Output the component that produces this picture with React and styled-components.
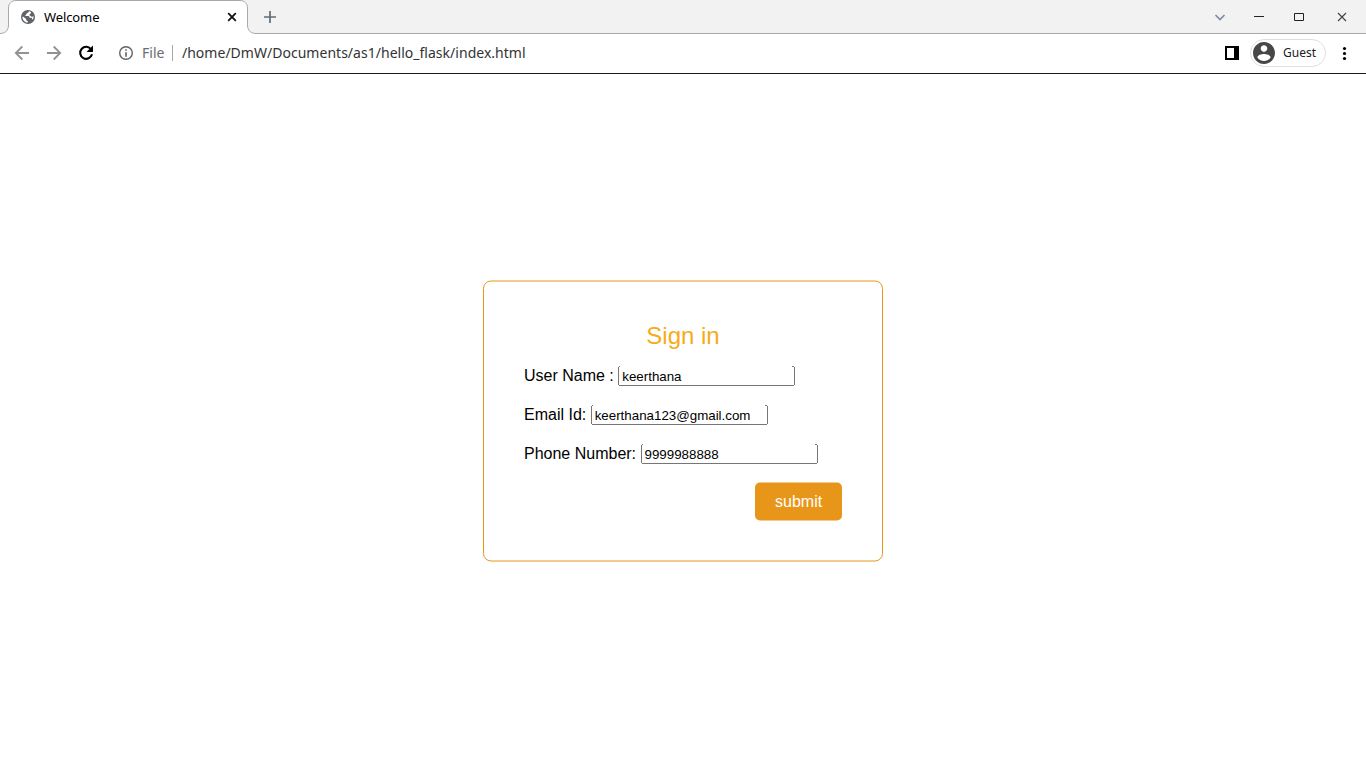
import React from "react";
import styled, { createGlobalStyle } from "styled-components";

const GlobalStyle = createGlobalStyle`
  *, *::before, *::after { box-sizing: border-box; }
  body { margin: 0; background: #fff; overflow: hidden; }
`;

const Window = styled.div`
  width: 1366px;
  height: 768px;
  display: flex;
  flex-direction: column;
  background: #fff;
  font-family: "Noto Sans", sans-serif;
`;

const TabStrip = styled.div`
  height: 34px;
  display: flex;
  flex: none;
  background: #f2f2f2;
`;

const TabEdge = styled.div`
  width: 8px;
  border-bottom: 1px solid #a9a9a9;
`;

const Tab = styled.div`
  position: relative;
  width: 240px;
  height: 34px;
  padding: 0 9px 0 12px;
  display: flex;
  align-items: center;
  font-size: 13px;
  letter-spacing: -0.1px;
  color: #000;
`;

const TabShape = styled.svg`
  position: absolute;
  left: -8px;
  top: 0;
`;

const TabTitle = styled.span`
  position: relative;
  flex: 1;
  margin-left: 8px;
  line-height: 18px;
`;

const Icon = styled.svg`
  position: relative;
  display: block;
  flex: none;
`;

const StripRest = styled.div`
  flex: 1;
  display: flex;
  align-items: center;
  justify-content: space-between;
  padding: 1px 16px 0;
  border-bottom: 1px solid #a9a9a9;
`;

const WindowControls = styled.div`
  display: flex;
  gap: 28px;
`;

const Toolbar = styled.div`
  height: 40px;
  flex: none;
  display: flex;
  align-items: center;
  padding: 0 14px 1px 12px;
  border-bottom: 1px solid #1a1a1f;
`;

const NavButtons = styled.div`
  display: flex;
  gap: 12px;
`;

const AddressBar = styled.div`
  flex: 1;
  display: flex;
  align-items: center;
  margin-left: 22px;
  font-size: 14px;
  line-height: 20px;
  letter-spacing: 0.02px;
  color: #333;
`;

const Scheme = styled.span`
  margin-left: 8px;
  padding-right: 8px;
  color: #6b6b70;
`;

const Divider = styled.span`
  width: 1px;
  height: 16px;
  margin-right: 8.5px;
  background: #a8a8a8;
`;

const Profile = styled.div`
  width: 76px;
  height: 28px;
  margin: 0 10px 0 10px;
  padding-left: 2px;
  display: flex;
  align-items: center;
  gap: 8px;
  border: 1px solid #dfdfdf;
  border-radius: 14px;
  font-size: 12px;
  color: #202124;
`;

const ProfileName = styled.span`
  line-height: 16px;
`;

const Page = styled.main`
  flex: 1;
  padding-top: 206px;
  font-family: "Liberation Sans", Arial, sans-serif;
  font-size: 16px;
  color: #000;
`;

const Card = styled.form`
  width: 400px;
  height: 281px;
  margin: 0 auto;
  padding: 40px;
  border: 1px solid #e8961a;
  border-radius: 8px;
  transform: translateY(0.5px);
`;

const Title = styled.h1`
  height: 28px;
  margin: 0 0 16px;
  font-size: 24px;
  font-weight: 400;
  line-height: 28px;
  text-align: center;
  color: #f5ac18;
`;

const Field = styled.label`
  display: flex;
  height: 21px;
  margin-bottom: 18px;
  line-height: 20px;
  white-space: pre;
`;

/* Open-topped outline: sides, base and short ticks at the upper corners. */
const Input = styled.input`
  width: 177px;
  height: 20px;
  padding: 3px 3px 2px 4px;
  border: 0;
  outline: 0;
  transform: translateY(0.5px);
  background:
    linear-gradient(#767676, #767676) 0 1px / 1px 18px no-repeat,
    linear-gradient(#767676, #767676) 176px 1px / 1px 18px no-repeat,
    linear-gradient(#767676, #767676) 1px 19px / 175px 1px no-repeat,
    linear-gradient(#767676, #767676) 1px 0 / 1px 1px no-repeat,
    linear-gradient(#767676, #767676) 174px 0 / 2px 1px no-repeat,
    #fff;
  font-family: "Liberation Sans", Arial, sans-serif;
  font-size: 13.3333px;
`;

const Submit = styled.button`
  display: block;
  width: 87px;
  height: 38px;
  margin-left: auto;
  padding: 10px 20px;
  border: 0;
  border-radius: 5px;
  background: #e8961a;
  color: #fff;
  font-family: "Liberation Sans", Arial, sans-serif;
  font-size: 16px;
`;

const fields = [
  { label: "User Name : ", value: "keerthana" },
  { label: "Email Id: ", value: "keerthana123@gmail.com" },
  { label: "Phone Number: ", value: "9999988888" },
];

export default function App() {
  return (
    <>
      <GlobalStyle />
      <Window>
        <TabStrip>
          <TabEdge />
          <Tab>
            <TabShape width="256" height="34" fill="none">
              <path d="M0 34V33.5C5 33.5 8.5 30.5 8.5 25V8C8.5 3.5 11.5.5 16 .5H240C244.500.5 247.500 3.500 247.500 8V25C247.500 30.500 251 33.500 256 33.500V34Z" fill="#fff" />
              <path d="M0 33.500C5 33.500 8.500 30.500 8.500 25V8C8.500 3.500 11.500.5 16 .5H240C244.500.5 247.500 3.500 247.500 8V25C247.500 30.500 251 33.500 256 33.500" stroke="#a9a9a9" />
            </TabShape>
            <Icon width="16" height="16" viewBox="0 0 16 16">
              <circle cx="8" cy="8" r="7" fill="#5f6368" />
              <path d="M8.800 2.300C8.800 3.400 8.200 3.900 7.300 4.100C6.500 4.300 6.600 5.200 6 5.700C5.400 6.200 5 6.600 5.500 7H8.200C9.300 7 9.500 7.700 9.500 8.800H11C12 8.800 12.200 9.500 12.300 10.900C13.300 9.900 13.700 8.800 13.600 7.300C12.800 7.600 12 8 11.200 7.400C10.400 6.800 9.400 6.700 9.500 5.700C9.600 4.700 11.200 5.200 11.100 3.300C10.400 2.700 9.700 2.400 8.800 2.300ZM2.400 7.700C2.400 10.900 4.700 13.500 7.800 13.600V12.100C6.800 12.100 6.200 11.500 6.200 10.600V9.900L3.300 7.700Z" fill="#fff" />
            </Icon>
            <TabTitle>Welcome</TabTitle>
            <Icon width="14" height="14" viewBox="0 0 14 14">
              <path d="M3.200 3.200l7.600 7.600M10.800 3.200l-7.600 7.600" stroke="#111" strokeWidth="1.800" />
            </Icon>
          </Tab>
          <StripRest>
            <Icon width="12" height="12" viewBox="0 0 12 12">
              <path d="M6 0v12M0 6h12" stroke="#626b7d" strokeWidth="1.700" />
            </Icon>
            <WindowControls>
              <Icon width="16" height="12" viewBox="0 0 16 12" fill="none">
                <path d="M5.500 4l4.500 4.500L14.500 4" stroke="#7f8ba1" strokeWidth="1.700" />
              </Icon>
              <Icon width="12" height="12" viewBox="0 0 12 12">
                <path d="M0 5.500h10" stroke="#222" />
              </Icon>
              <Icon width="12" height="12" viewBox="0 0 12 12" fill="none">
                <path d="M.5 2.500h9v7h-9z" stroke="#222" />
              </Icon>
              <Icon width="16" height="12" viewBox="0 0 16 12">
                <path d="M4 2l8 8M12 2l-8 8" stroke="#444" strokeWidth="1.200" />
              </Icon>
            </WindowControls>
          </StripRest>
        </TabStrip>
        <Toolbar>
          <NavButtons>
            <Icon width="20" height="20" viewBox="0 0 20 20" fill="none">
              <path d="M17 10H4M10.300 3.500L3.800 10l6.500 6.500" stroke="#929292" strokeWidth="1.800" />
            </Icon>
            <Icon width="20" height="20" viewBox="0 0 20 20" fill="none">
              <path d="M3 10h13M9.700 3.500L16.200 10l-6.500 6.500" stroke="#929292" strokeWidth="1.800" />
            </Icon>
            <Icon width="20" height="20" viewBox="0 0 20 20" fill="none">
              <path d="M15.200 6.500A6 6 0 1 0 16 11.300" stroke="#000" strokeWidth="2.100" />
              <path d="M17 2.500V9H10.500Z" fill="#000" />
            </Icon>
          </NavButtons>
          <AddressBar>
            <Icon width="16" height="16" viewBox="0 0 16 16" fill="none">
              <circle cx="8" cy="8" r="6.300" stroke="#5f6368" strokeWidth="1.400" />
              <path d="M8 4.200v1.600M8 7.200v4.500" stroke="#5f6368" strokeWidth="1.600" />
            </Icon>
            <Scheme>File</Scheme>
            <Divider />
            <span>/home/DmW/Documents/as1/hello_flask/index.html</span>
          </AddressBar>
          <Icon width="16" height="16" viewBox="0 0 16 16">
            <path d="M1 1h14v14H1zM3 3v10h7V3z" fill="#000" fillRule="evenodd" />
          </Icon>
          <Profile>
            <Icon width="22" height="22" viewBox="2 2 20 20">
              <path d="M12 2C6.480 2 2 6.480 2 12s4.480 10 10 10 10-4.480 10-10S17.520 2 12 2zm0 3c1.660 0 3 1.340 3 3s-1.340 3-3 3-3-1.340-3-3 1.340-3 3-3zm0 14.200c-2.500 0-4.710-1.280-6-3.220.03-1.990 4-3.080 6-3.080 1.990 0 5.970 1.090 6 3.080-1.290 1.940-3.500 3.220-6 3.220z" fill="#47474a" />
            </Icon>
            <ProfileName>Guest</ProfileName>
          </Profile>
          <Icon width="16" height="16" viewBox="0 0 16 16" fill="#000">
            <circle cx="8.500" cy="3.500" r="1.600" />
            <circle cx="8.500" cy="8.500" r="1.600" />
            <circle cx="8.500" cy="13.500" r="1.600" />
          </Icon>
        </Toolbar>
        <Page>
          <Card>
            <Title>Sign in</Title>
            {fields.map((field) => (
              <Field key={field.label}>
                {field.label}
                <Input defaultValue={field.value} />
              </Field>
            ))}
            <Submit type="button">submit</Submit>
          </Card>
        </Page>
      </Window>
    </>
  );
}
